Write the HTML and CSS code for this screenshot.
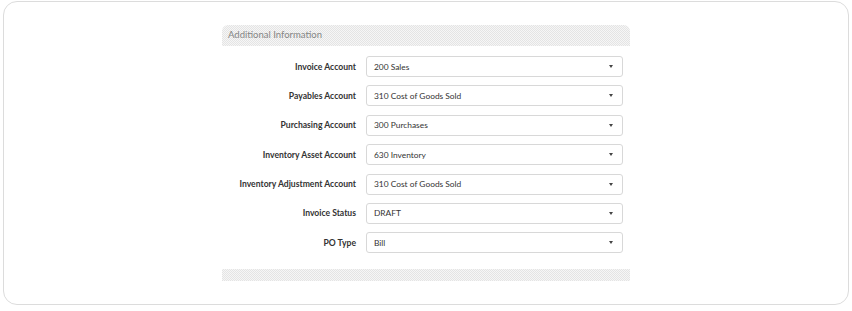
FILE: index.html
```html
<!DOCTYPE html>
<html lang="en">
<head>
    <meta charset="UTF-8">
    <title>Additional Information</title>
    <link rel="stylesheet" href="styles.css">
</head>
<body>
    <div class="card">
        <div class="section">
            <div class="sect-head">Additional Information</div>
            <div class="rows">
                <div class="row">
                    <label>Invoice Account</label>
                    <div class="sel">200 Sales<span class="caret"></span></div>
                </div>
                <div class="row">
                    <label>Payables Account</label>
                    <div class="sel">310 Cost of Goods Sold<span class="caret"></span></div>
                </div>
                <div class="row">
                    <label>Purchasing Account</label>
                    <div class="sel">300 Purchases<span class="caret"></span></div>
                </div>
                <div class="row">
                    <label>Inventory Asset Account</label>
                    <div class="sel">630 Inventory<span class="caret"></span></div>
                </div>
                <div class="row">
                    <label>Inventory Adjustment Account</label>
                    <div class="sel">310 Cost of Goods Sold<span class="caret"></span></div>
                </div>
                <div class="row">
                    <label>Invoice Status</label>
                    <div class="sel">DRAFT<span class="caret"></span></div>
                </div>
                <div class="row">
                    <label>PO Type</label>
                    <div class="sel">Bill<span class="caret"></span></div>
                </div>
            </div>
            <div class="sect-foot"></div>
        </div>
    </div>
</body>
</html>
```

FILE: styles.css
```css
body {
    margin: 0;
    background: #fff;
    font-family: Lato, "Open Sans", sans-serif;
}

.card {
    box-sizing: border-box;
    width: 846px;
    height: 304px;
    margin: 1px 0 0 3px;
    border: 1px solid #dcdcdc;
    border-radius: 14px;
    padding-top: 23px;
}

.section {
    width: 408px;
    margin: 0 auto;
}

.sect-head {
    height: 21px;
    line-height: 20px;
    padding-left: 6px;
    font-size: 9.5px;
    color: #858585;
    border-radius: 6px 6px 0 0;
    background: conic-gradient(#e4e4e4 25%, #f6f6f6 0 50%, #e4e4e4 0 75%, #f6f6f6 0) 0 0 / 2px 2px;
}

.rows {
    display: flex;
    flex-direction: column;
    gap: 8.4px;
    padding: 10px 7px 0 0;
}

.row {
    display: flex;
    align-items: center;
}

.row label {
    width: 144px;
    flex: none;
    text-align: right;
    font-size: 8.6px;
    font-weight: bold;
    color: #333;
    padding-right: 10px;
    box-sizing: border-box;
}

.sel {
    flex: 1;
    height: 21px;
    box-sizing: border-box;
    border: 1px solid #d8d8d8;
    border-radius: 3px;
    padding: 0 9px 0 7px;
    display: flex;
    align-items: center;
    justify-content: space-between;
    font-size: 8.4px;
    color: #333;
}

.caret {
    width: 0;
    height: 0;
    border-left: 2.5px solid transparent;
    border-right: 2.5px solid transparent;
    border-top: 3px solid #444;
}

.sect-foot {
    height: 12px;
    margin-top: 16px;
    background: conic-gradient(#e4e4e4 25%, #f6f6f6 0 50%, #e4e4e4 0 75%, #f6f6f6 0) 0 0 / 2px 2px;
}
```
